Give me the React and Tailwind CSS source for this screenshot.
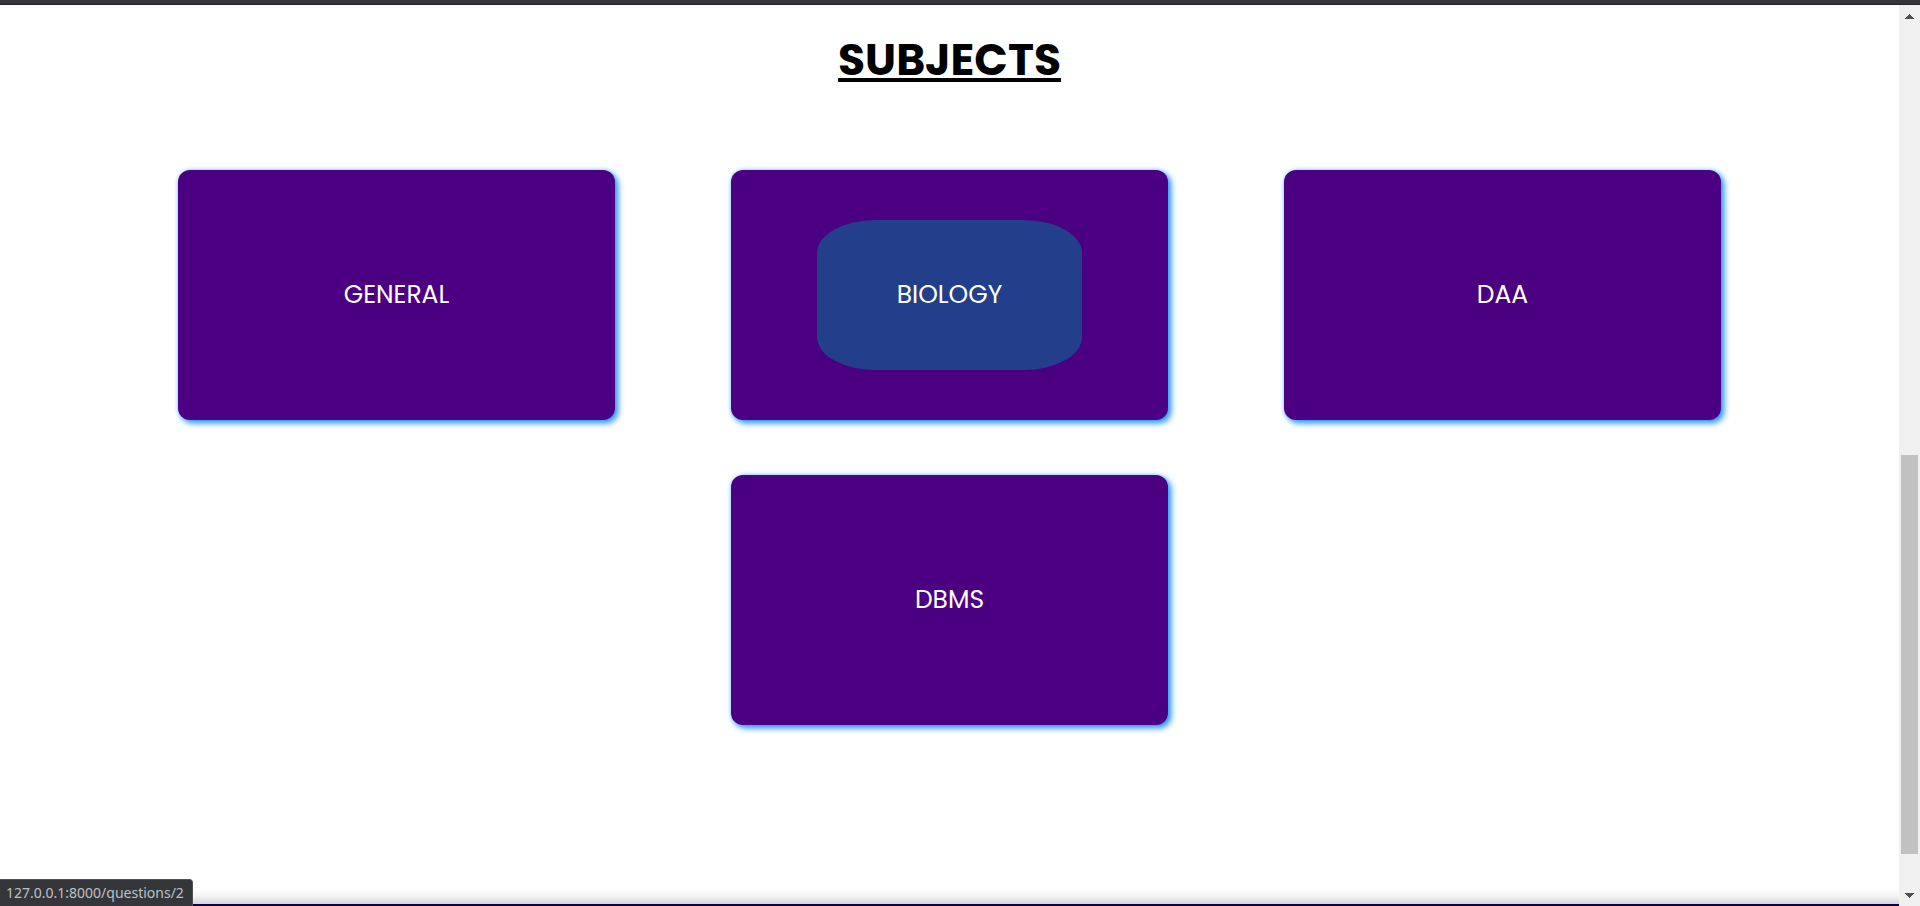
const subjects = [
  { id: 1, name: 'GENERAL' },
  { id: 2, name: 'BIOLOGY', active: true },
  { id: 3, name: 'DAA' },
  { id: 4, name: 'DBMS' },
];

function SubjectCard({ subject }) {
  return (
    <li className="flex h-[250px] w-full max-w-[437px] items-center justify-center rounded-xl bg-[#4b0082] shadow-[3px_3px_6px_#1e90ff,0_0_4px_#1e90ff66]">
      <a
        href={`/questions/${subject.id}`}
        className={
          subject.active
            ? 'flex h-[150px] w-[265px] items-center justify-center rounded-[22%] bg-[#233e8b]'
            : 'flex h-[150px] w-[265px] items-center justify-center rounded-[22%]'
        }
      >
        {subject.name}
      </a>
    </li>
  );
}

function ScrollBar() {
  return (
    <div className="flex w-[21px] shrink-0 flex-col bg-[#f0f0f0]">
      <button type="button" aria-label="Scroll up" className="flex h-[22px] items-center justify-center">
        <svg width="9" height="5" viewBox="0 0 9 5" fill="#505050" shapeRendering="crispEdges">
          <path d="M4 0h1v1h1v1h1v1h1v1h1v1H0V4h1V3h1V2h1V1h1z" />
        </svg>
      </button>
      <div className="flex flex-1 flex-col px-[2px]">
        <div className="grow-[428]" />
        <div className="grow-[399] bg-[#c1c1c1]" />
        <div className="grow-[30]" />
      </div>
      <button type="button" aria-label="Scroll down" className="flex h-[22px] items-center justify-center">
        <svg width="9" height="5" viewBox="0 0 9 5" fill="#505050" shapeRendering="crispEdges">
          <path d="M0 0h9v1H8v1H7v1H6v1H5v1H4V4H3V3H2V2H1V1H0z" />
        </svg>
      </button>
    </div>
  );
}

export default function App() {
  return (
    <div className="flex min-h-screen flex-col bg-white font-['Poppins','Inter',sans-serif]">
      <div className="h-[5px] border-b border-[#242528] bg-[#35363a]" />
      <div className="flex flex-1">
        <div className="flex min-w-0 flex-1 flex-col">
          <main className="flex-1 pt-[25px] pb-20">
            <h1 className="text-center text-[44px] leading-[60px] font-bold text-black underline decoration-4 underline-offset-[3px] [text-decoration-skip-ink:none]">
              SUBJECTS
            </h1>
            <ul className="mx-auto mt-20 flex w-[82%] flex-wrap justify-center gap-x-[116px] gap-y-[55px] text-[25px] leading-9 text-white">
              {subjects.map((subject) => (
                <SubjectCard key={subject.id} subject={subject} />
              ))}
            </ul>
          </main>
          <footer className="border-b-2 border-[#0d0050]">
            <div className="h-4 bg-linear-to-b from-white via-[#f4f4f4] to-[#d6d6d6]" />
          </footer>
        </div>
        <ScrollBar />
      </div>
      <div className="fixed bottom-0 left-0 rounded-tr border-t border-r border-[#505256] bg-[#35363a] pt-[3px] pr-[8px] pb-[3px] pl-[6px] font-['Noto_Sans',sans-serif] text-[14px] leading-5 text-[#bdc1c6]">
        127.0.0.1:8000/questions/2
      </div>
    </div>
  );
}
